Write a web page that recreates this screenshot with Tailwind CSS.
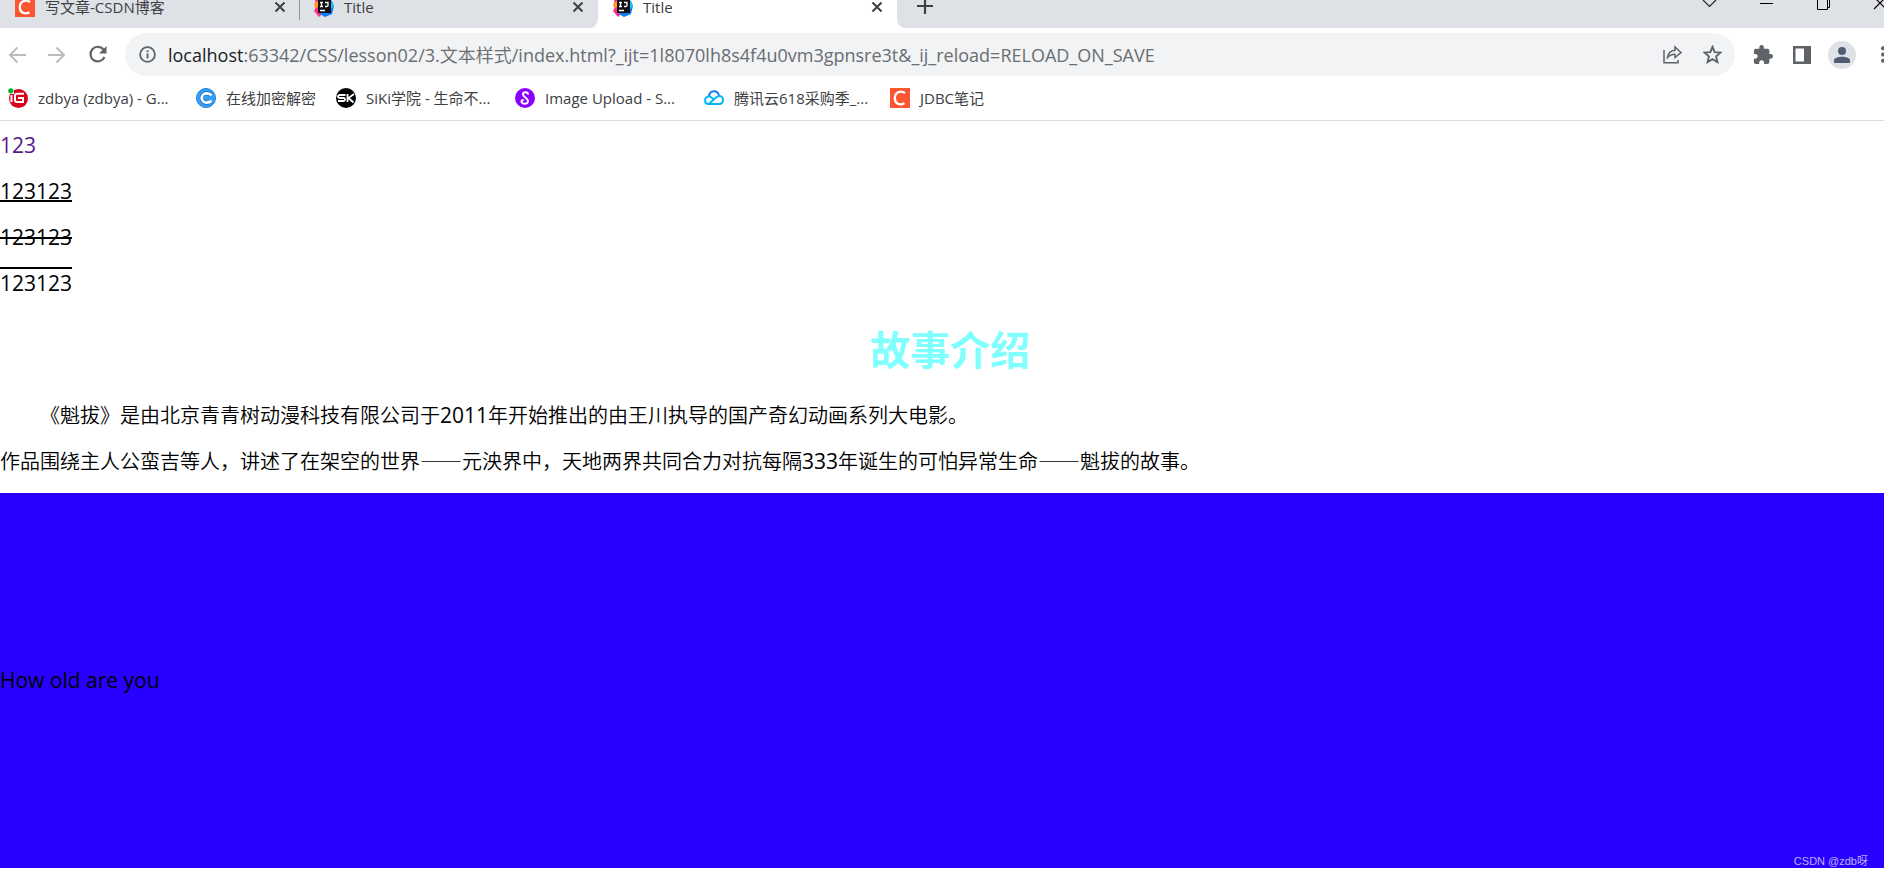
<!DOCTYPE html>
<html lang="zh-CN">
<head>
<meta charset="utf-8">
<title>Title</title>
<script src="https://cdn.jsdelivr.net/npm/@tailwindcss/browser@4"></script>
</head>
<body class="min-h-screen overflow-x-hidden bg-white font-['Open_Sans','Noto_Sans_CJK_SC',sans-serif] text-black">
<svg class="hidden">
  <symbol id="csdn" viewBox="0 0 20 20"><path fill="#fc5531" d="M0 0h20v20H0z"/><path d="M15 5.200C10.500 1.800 4.800 4.500 4.800 10.300c0 5.500 5 7.400 9.700 4.900" fill="none" stroke="#fff" stroke-width="2.300"/></symbol>
  <symbol id="idea" viewBox="0 0 20 20"><path fill="#fe2d8b" d="M1 3l6-2 3 14-5 5-5-6 2-4z"/><path fill="#ff9a1f" d="M0 7l5-4v7l-4 1z"/><path fill="#087cfa" d="M12 1l6 3 2 5-2 8-7 3-5-3z"/><path fill="#18c8f5" d="M17 4l3 5-3 3z"/><path fill="#111" d="M4 3h13v13H4z"/><path d="M6 5.500h3M7.500 5v4.500M6 9.500h3M11 5.500h3v3q0 1-1.500 1H11M6 13.500h5" stroke="#fff" stroke-width="1.300" fill="none"/></symbol>
  <symbol id="x" viewBox="0 0 12 12"><path d="M1.500 1.500l9 9M10.500 1.500l-9 9" stroke="#3c4043" stroke-width="2"/></symbol>
</svg>

<header>
  <nav class="flex h-7 overflow-hidden bg-[#dee1e6] text-[15px] leading-none text-[#3c4043]" aria-label="Tabs">
    <div class="flex w-[299px] shrink-0 pr-[13px] pl-[15px]">
      <div class="flex h-[14px] w-full items-center gap-[10px]">
        <svg class="size-5 shrink-0"><use href="#csdn"/></svg><span class="grow whitespace-nowrap">写文章-CSDN博客</span>
        <button aria-label="Close tab"><svg class="size-3"><use href="#x"/></svg></button>
      </div>
    </div>
    <div class="flex w-[299px] shrink-0 rounded-br-[10px] pr-[14px]">
      <div class="h-5 w-px bg-[#8f9296]"></div>
      <div class="flex h-[14px] w-full items-center gap-[10px] pl-[14px]">
        <svg class="size-5 shrink-0"><use href="#idea"/></svg><span class="grow">Title</span>
        <button aria-label="Close tab"><svg class="size-3"><use href="#x"/></svg></button>
      </div>
    </div>
    <div class="relative flex w-[299px] shrink-0 bg-white pr-[14px] pl-[15px]">
      <svg class="absolute right-full bottom-0 size-[10px]" viewBox="0 0 10 10"><path d="M10 0v10H0Q10 10 10 0" fill="#fff"/></svg>
      <svg class="absolute bottom-0 left-full size-[10px]" viewBox="0 0 10 10"><path d="M0 0v10h10Q0 10 0 0" fill="#fff"/></svg>
      <div class="flex h-[14px] w-full items-center gap-[10px]">
        <svg class="size-5 shrink-0"><use href="#idea"/></svg><span class="grow">Title</span>
        <button aria-label="Close tab"><svg class="size-3"><use href="#x"/></svg></button>
      </div>
    </div>
    <button class="ml-5 flex h-3 items-center" aria-label="New tab"><svg class="size-4" viewBox="0 0 16 16"><path d="M8 0v16M0 8h16" stroke="#3c4043" stroke-width="2.200"/></svg></button>
    <div class="-mr-1 ml-auto flex h-2 shrink-0 items-center gap-[42px]">
      <button aria-label="Search tabs"><svg class="h-4 w-[15px]" viewBox="0 0 15 16"><path d="M1 4l6.500 6.500L14 4" fill="none" stroke="#222" stroke-width="1.200"/></svg></button>
      <button aria-label="Minimize"><svg class="h-4 w-[15px]" viewBox="0 0 15 16"><path d="M1 7h13v1H1z"/></svg></button>
      <button aria-label="Restore"><svg class="h-4 w-[15px]" viewBox="0 0 15 16"><path d="M1.500 2.500h10v11h-10zM4 .5h9.500v11H12" fill="none" stroke="#000"/></svg></button>
      <button aria-label="Close"><svg class="h-4 w-[15px]" viewBox="0 0 15 16"><path d="M1 1l12 12M13 1L1 13" fill="none" stroke="#000" stroke-width="1.200"/></svg></button>
    </div>
  </nav>

  <div class="flex items-center overflow-hidden pt-[5px] pl-2">
    <div class="flex w-[117px] shrink-0 items-center gap-[22px]">
      <button aria-label="Back"><svg class="size-[18px]" viewBox="0 0 18 18"><path d="M18 9H3M9.500 1.500L2 9l7.500 7.500" fill="none" stroke="#babcbe" stroke-width="2"/></svg></button>
      <button aria-label="Forward"><svg class="size-[18px]" viewBox="0 0 18 18"><path d="M0 9h15M8.500 1.500L16 9l-7.500 7.500" fill="none" stroke="#babcbe" stroke-width="2"/></svg></button>
      <button aria-label="Reload"><svg class="size-[19px]" viewBox="0 0 19 19"><path d="M15.500 4.500A7.300 7.300 0 1 0 16.500 12" fill="none" stroke="#5f6368" stroke-width="2.200"/><path d="M18.500 1v7.500H11z" fill="#5f6368"/></svg></button>
    </div>
    <div class="flex h-[43px] grow items-center rounded-full bg-[#f1f3f4] pr-[13px] pl-[14px]">
      <svg class="mr-3 size-[17px] shrink-0" viewBox="0 0 17 17"><circle cx="8.500" cy="8.500" r="7.400" fill="none" stroke="#5f6368" stroke-width="1.800"/><path d="M7.600 7.500h1.900v5H7.600zM7.600 4.300h1.900v1.900H7.600z" fill="#5f6368"/></svg>
      <div class="grow text-lg leading-6 whitespace-nowrap text-[#6a6d71]" role="textbox" aria-label="Address"><span class="text-[#202124]">localhost</span>:63342/CSS/lesson02/3.<span class="font-[350]">文本样式</span>/index.html?_ijt=1l8070lh8s4f4u0vm3gpnsre3t&amp;_ij_reload=RELOAD_ON_SAVE</div>
      <button class="mr-[21px]" aria-label="Share"><svg class="size-[19px]" viewBox="0 0 19 19" fill="none" stroke="#5f6368" stroke-width="1.500"><path d="M1 5v12.700h14V15"/><path d="M4.500 12.500C5 8 8 5.500 12 5.200V2l6 5.500-6 5V9.300c-3.500 0-5.500 1-7.500 3.200z"/></svg></button>
      <button aria-label="Bookmark"><svg class="size-[19px]" viewBox="0 0 19 19"><path d="M9.500 1.800l2.200 5.300 5.700.5-4.300 3.800 1.300 5.700-4.900-3-4.900 3 1.300-5.700L1.600 7.600l5.700-.5z" fill="none" stroke="#5f6368" stroke-width="1.900"/></svg></button>
    </div>
    <div class="-mr-[3px] flex shrink-0 items-center pl-[18px]">
      <button class="mr-5" aria-label="Extensions"><svg class="size-5" viewBox="1 1 22 22"><path fill="#5f6368" d="M20.500 11H19V7a2 2 0 0 0-2-2h-4V3.500a2.500 2.500 0 0 0-5 0V5H4a2 2 0 0 0-2 2v3.800h1.500a2.700 2.700 0 0 1 0 5.400H2V20a2 2 0 0 0 2 2h3.800v-1.500a2.700 2.700 0 0 1 5.400 0V22H17a2 2 0 0 0 2-2v-4h1.500a2.500 2.500 0 0 0 0-5z"/></svg></button>
      <button class="mr-[17px]" aria-label="Side panel"><svg class="size-[18px]" viewBox="0 0 18 18"><path fill="#5f6368" fill-rule="evenodd" d="M0 0h18v18H0zM2.500 2.500v13H11v-13z"/></svg></button>
      <button class="mr-[23px] grid size-7 place-items-center rounded-full bg-[#dee1e6]" aria-label="Profile"><svg class="size-4" viewBox="0 0 16 16" fill="#4f5d73"><circle cx="8" cy="4" r="4"/><path d="M0 16v-2.500C0 11 4 9.800 8 9.800s8 1.200 8 3.700V16z"/></svg></button>
      <button aria-label="Menu"><svg class="h-[17px] w-2" viewBox="0 0 8 17" fill="#5f6368"><circle cx="4" cy="2.200" r="2"/><circle cx="4" cy="8.500" r="2"/><circle cx="4" cy="14.800" r="2"/></svg></button>
    </div>
  </div>

  <nav class="flex h-[45px] items-center gap-5 border-b border-[#dadce0] pl-2 text-[15px] whitespace-nowrap text-[#3c4043]" aria-label="Bookmarks">
    <a href="#" class="flex w-[168px] items-center gap-[10px]"><svg class="size-5 shrink-0" viewBox="0 0 20 20"><circle cx="10.500" cy="10.500" r="9.500" fill="#d9001b"/><path d="M0 0h6v6H0z" fill="#fff"/><circle cx="2.800" cy="2.800" r="2.600" fill="#00b42a"/><path d="M3.500 7v7M16 5.800H9q-2 0-2 2V12q0 2 2 2h6v-4h-5" fill="none" stroke="#fff" stroke-width="2"/></svg>zdbya (zdbya) - G...</a>
    <a href="#" class="flex w-[120px] items-center gap-[10px]"><svg class="size-5 shrink-0" viewBox="0 0 20 20"><circle cx="10" cy="10" r="9.500" fill="#35a0f8" stroke="#1c7fd6"/><path d="M15.500 7.300q-1.500-2-5-2a4.700 4.700 0 0 0 0 9.400q3.500 0 5-2" fill="none" stroke="#1976c9" stroke-width="4.400"/><path d="M15.500 7.300q-1.500-2-5-2a4.700 4.700 0 0 0 0 9.400q3.500 0 5-2" fill="none" stroke="#fff" stroke-width="2.800"/></svg>在线加密解密</a>
    <a href="#" class="flex w-[159px] items-center gap-[10px]"><svg class="size-5 shrink-0" viewBox="0 0 20 20"><circle cx="10" cy="10" r="10"/><path d="M9.500 7H4q-2 0-2 1.500T4 10h3.500Q9 10 9 11.500T7.500 13H2M11.500 6v8M18 6l-5.500 4 5 4.500" fill="none" stroke="#fff" stroke-width="1.800"/></svg>SiKi学院 - 生命不...</a>
    <a href="#" class="flex w-[169px] items-center gap-[10px]"><svg class="size-5 shrink-0" viewBox="0 0 20 20"><circle cx="10" cy="10" r="10" fill="#8a00ff"/><path d="M13 6.500c0-3-5-3-5 0 0 2.500 5 3.500 5 6.500 0 4-7 3.500-6.500 0 .2-1 1.500-1.200 2-.3" fill="none" stroke="#fff" stroke-width="2"/></svg>Image Upload - S...</a>
    <a href="#" class="flex w-[166px] items-center gap-[10px]"><svg class="size-5 shrink-0" viewBox="0 0 20 20" fill="none" stroke-width="2"><path d="M5 8.500C5 1.500 14.500 1.500 15 8" stroke="#1478ff"/><path d="M10.500 12L6.500 8.800C3 7.500 1 10 1 12.500 1 15 3 16 5 16h10c5 0 5.500-8 .5-8-2 0-3 .8-4.500 2.300L5.500 15.500" stroke="#00b8f5"/></svg>腾讯云618采购季_...</a>
    <a href="#" class="flex items-center gap-[10px]"><svg class="size-5 shrink-0"><use href="#csdn"/></svg>JDBC笔记</a>
  </nav>
</header>

<main class="pt-[11px] text-xl leading-[26px]">
  <div class="flex flex-col gap-5 text-[21px]">
    <p><a href="#" class="text-[#551a8b]">123</a></p>
    <p><span class="underline decoration-2 underline-offset-1">123123</span></p>
    <p><span class="line-through decoration-2">123123</span></p>
    <p><span class="overline decoration-2">123123</span></p>
  </div>
  <h1 class="mt-7 mb-[27px] pl-4 text-center text-[40px] leading-[52px] font-bold text-[#80ffff]">故事介绍</h1>
  <div class="flex flex-col gap-5 font-[350]">
    <p class="indent-10">《魁拔》是由北京青青树动漫科技有限公司于<span class="text-[21px] leading-none font-normal">2011</span>年开始推出的由王川执导的国产奇幻动画系列大电影。</p>
    <p>作品围绕主人公蛮吉等人，讲述了在架空的世界<span class="font-['Noto_Sans_CJK_SC',sans-serif] text-[21px] leading-none">——</span>元泱界中，天地两界共同合力对抗每隔<span class="text-[21px] leading-none font-normal">333</span>年诞生的可怕异常生命<span class="font-['Noto_Sans_CJK_SC',sans-serif] text-[21px] leading-none">——</span>魁拔的故事。</p>
  </div>
  <div class="relative mt-[18px] bg-[#2800ff]">
    <p class="text-[21px] leading-[375px]">How old are you</p>
    <span class="absolute right-4 bottom-0 font-['Liberation_Sans','Noto_Sans_CJK_SC',sans-serif] text-[11px] leading-[14px] text-white/70">CSDN @zdb呀</span>
  </div>
</main>
</body>
</html>
